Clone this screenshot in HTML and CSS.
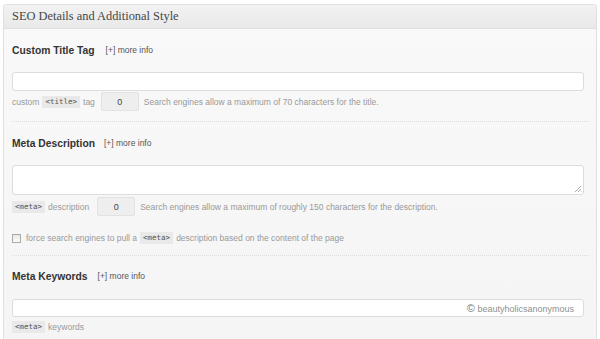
FILE: index.html
```html
<!DOCTYPE html>
<html>
<head>
<meta charset="utf-8">
<link rel="stylesheet" href="styles.css">
</head>
<body>
<div class="panel">
  <div class="panel-head">SEO Details and Additional Style</div>
  <div class="panel-body">
    <div class="heading"><span class="title">Custom Title Tag</span><span class="more m1">[+] more info</span></div>
    <div class="field input"></div>
    <div class="meta-row">
      <span class="lbl">custom</span><code>&lt;title&gt;</code><span class="lbl">tag</span>
      <span class="count c1">0</span>
      <span class="hint">Search engines allow a maximum of 70 characters for the title.</span>
    </div>
    <div class="sep"></div>

    <div class="heading"><span class="title">Meta Description</span><span class="more m2">[+] more info</span></div>
    <div class="field textarea">
      <svg class="grip" width="8" height="8" viewBox="0 0 8 8"><path d="M7 1L1 7M7 4L4 7M7 6.5L6.5 7" stroke="#aaa" stroke-width="1" fill="none"/></svg>
    </div>
    <div class="meta-row">
      <code>&lt;meta&gt;</code><span class="lbl">description</span>
      <span class="count c2">0</span>
      <span class="hint">Search engines allow a maximum of roughly 150 characters for the description.</span>
    </div>
    <div class="check-row">
      <span class="box"></span>
      <span class="lbl">force search engines to pull a</span><code>&lt;meta&gt;</code><span class="lbl">description based on the content of the page</span>
    </div>
    <div class="sep"></div>

    <div class="heading h3"><span class="title">Meta Keywords</span><span class="more m3">[+] more info</span></div>
    <div class="field input kw"><span class="mark"><span class="copy">©</span> beautyholicsanonymous</span></div>
    <div class="label-row"><code>&lt;meta&gt;</code><span class="lbl">keywords</span></div>
  </div>
</div>
</body>
</html>
```

FILE: styles.css
```css
html, body {
  margin: 0;
  padding: 0;
  background: #fefefe;
  font-family: "Liberation Sans", Arial, sans-serif;
}
.panel {
  margin: 4px 3px 0 3px;
  border: 1px solid #e0e0e0;
  border-bottom: none;
  border-radius: 4px 4px 0 0;
  background: linear-gradient(#f9f9f9, #f4f4f4);
  height: 400px;
  box-sizing: border-box;
}
.panel-head {
  height: 23px;
  line-height: 23px;
  padding-left: 8px;
  font-family: "Liberation Serif", "Times New Roman", serif;
  font-size: 12.4px;
  color: #464646;
  background: linear-gradient(#f2f2f2, #e9e9e9);
  border-bottom: 1px solid #dfdfdf;
  border-radius: 4px 4px 0 0;
}
.panel-body {
  padding: 0 12px 0 8px;
}
.heading {
  display: flex;
  align-items: center;
  height: 14px;
  margin-top: 14px;
}
.heading.h3 { margin-top: 13px; }
.title {
  font-weight: bold;
  font-size: 10.3px;
  color: #333;
}
.more {
  font-size: 8.5px;
  color: #555;
}
.m1 { margin-left: 11px; }
.m2 { margin-left: 9px; }
.m3 { margin-left: 10px; }
.field {
  background: #fff;
  border: 1px solid #dcdcdc;
  border-radius: 3px;
  box-sizing: border-box;
  position: relative;
}
.input {
  height: 19px;
  margin-top: 15px;
}
.input.kw {
  height: 18px;
  margin-top: 16px;
}
.textarea {
  height: 30px;
  margin-top: 15px;
}
.grip {
  position: absolute;
  right: 1px;
  bottom: 1px;
}
.mark {
  position: absolute;
  right: 9px;
  top: 1px;
  font-size: 9px;
  color: #8f8f8f;
  line-height: 14px;
}
.copy {
  font-size: 11px;
  color: #777;
}
.meta-row {
  display: flex;
  align-items: center;
  height: 19px;
  margin-top: 1px;
  font-size: 8.5px;
  color: #999;
}
code {
  font-family: "DejaVu Sans Mono", "Liberation Mono", monospace;
  font-size: 7.5px;
  background: #e9e9e9;
  color: #555;
  padding: 1px 3px;
  margin: 0 3px 0 0;
  line-height: 10px;
}
.lbl + code { margin-left: 3px; }
.count {
  width: 38px;
  height: 19px;
  box-sizing: border-box;
  background: #eee;
  border: 1px solid #e2e2e2;
  border-radius: 2px;
  color: #444;
  font-size: 9px;
  display: flex;
  align-items: center;
  justify-content: center;
}
.c1 { margin-left: 6px; margin-right: 5px; }
.c2 { margin-left: 8px; margin-right: 5px; }
.field.textarea + .meta-row { margin-top: 2px; }
.check-row {
  display: flex;
  align-items: center;
  height: 14px;
  margin-top: 15px;
  font-size: 8.5px;
  color: #999;
}
.box {
  width: 9px;
  height: 9px;
  border: 1px solid #aaa;
  background: linear-gradient(#e8e8e8, #fafafa);
  margin-right: 5px;
  box-sizing: border-box;
}
.sep {
  height: 0;
  border-top: 1px dotted #ddd;
  margin-top: 10px;
  margin-right: -5px;
}
.label-row {
  display: flex;
  align-items: center;
  height: 14px;
  margin-top: 3px;
  font-size: 8.5px;
  color: #999;
}
```
